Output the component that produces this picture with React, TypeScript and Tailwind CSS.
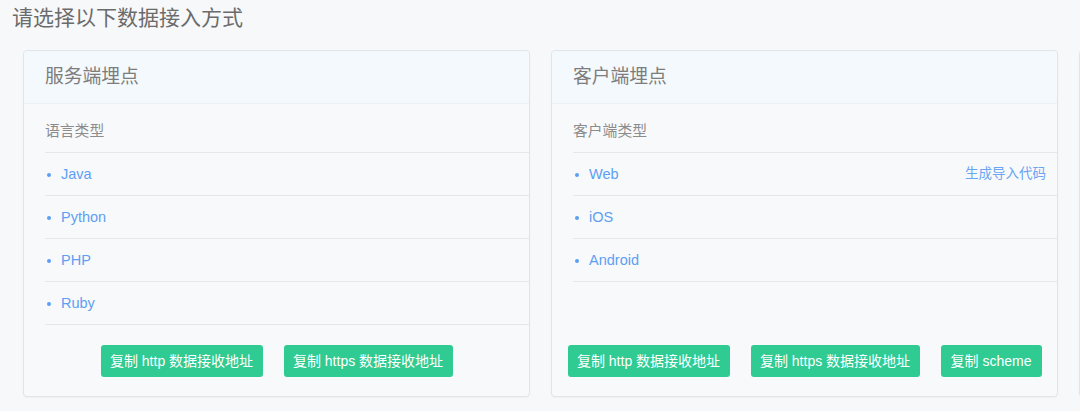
import type { ReactNode } from 'react';

const FONT = { fontFamily: '"Liberation Sans", Arial, "Noto Sans CJK SC", sans-serif' };

interface RowItem {
  label: string;
  action?: string;
}

interface AccessCardProps {
  title: string;
  typeLabel: string;
  rows: RowItem[];
  buttons: { label: string; width: string }[];
}

function Row({ item }: { item: RowItem }) {
  return (
    <li className="flex h-[43px] items-center justify-between border-b border-[#e4e7eb] pr-[11px] pt-[1px]">
      <div className="flex items-center">
        <span className="ml-[2px] h-[4px] w-[4px] rounded-full bg-[#5d9ff2]" />
        <span className="ml-[10px] text-[14.5px] text-[#5d9ff2]">{item.label}</span>
      </div>
      {item.action ? <span className="text-[13.5px] text-[#6aa6f2]">{item.action}</span> : null}
    </li>
  );
}

function CardShell({ children }: { children: ReactNode }) {
  return (
    <section className="flex h-[347px] w-[507px] shrink-0 flex-col rounded-[4px] border border-[#e1e4e8] bg-[#f8f9fb] shadow-[0_1px_2px_rgba(0,0,0,0.04)]">
      {children}
    </section>
  );
}

function AccessCard({ title, typeLabel, rows, buttons }: AccessCardProps) {
  return (
    <CardShell>
      <header className="flex h-[53px] items-center rounded-t-[4px] border-b border-[#eef1f4] bg-[#f4f9fe] pl-[21px]">
        <h2 className="pt-[1px] text-[18.8px] text-[#7d7d7d]">{title}</h2>
      </header>
      <div className="flex flex-1 flex-col pl-[21px]">
        <div className="flex h-[49px] items-center border-b border-[#e4e7eb] pt-[6px] text-[14.8px] text-[#8c8c8c]">
          {typeLabel}
        </div>
        <ul>
          {rows.map((row) => (
            <Row key={row.label} item={row} />
          ))}
        </ul>
      </div>
      <div className="flex justify-center gap-[21px] pb-[19px] pt-[20px]">
        {buttons.map((b) => (
          <button
            key={b.label}
            type="button"
            className={`flex h-[32px] items-center justify-center rounded-[3px] bg-[#2fcb93] text-[14px] text-white ${b.width}`}
          >
            {b.label}
          </button>
        ))}
      </div>
    </CardShell>
  );
}

export default function App() {
  return (
    <div className="h-[411px] w-[1080px] overflow-hidden bg-[#f7f8fa]" style={FONT}>
      <h1 className="pl-[12px] pt-[6px] text-[21px] leading-[24px] text-[#6b6b6b]">请选择以下数据接入方式</h1>
      <div className="mt-[20px] flex gap-[21px] pl-[23px]">
        <AccessCard
          title="服务端埋点"
          typeLabel="语言类型"
          rows={[{ label: 'Java' }, { label: 'Python' }, { label: 'PHP' }, { label: 'Ruby' }]}
          buttons={[
            { label: '复制 http 数据接收地址', width: 'w-[162px]' },
            { label: '复制 https 数据接收地址', width: 'w-[169px]' },
          ]}
        />
        <AccessCard
          title="客户端埋点"
          typeLabel="客户端类型"
          rows={[{ label: 'Web', action: '生成导入代码' }, { label: 'iOS' }, { label: 'Android' }]}
          buttons={[
            { label: '复制 http 数据接收地址', width: 'w-[162px]' },
            { label: '复制 https 数据接收地址', width: 'w-[169px]' },
            { label: '复制 scheme', width: 'w-[101px]' },
          ]}
        />
        <CardShell>
          <header className="h-[53px] rounded-t-[4px] border-b border-[#eef1f4] bg-[#f4f9fe]" />
        </CardShell>
      </div>
    </div>
  );
}
